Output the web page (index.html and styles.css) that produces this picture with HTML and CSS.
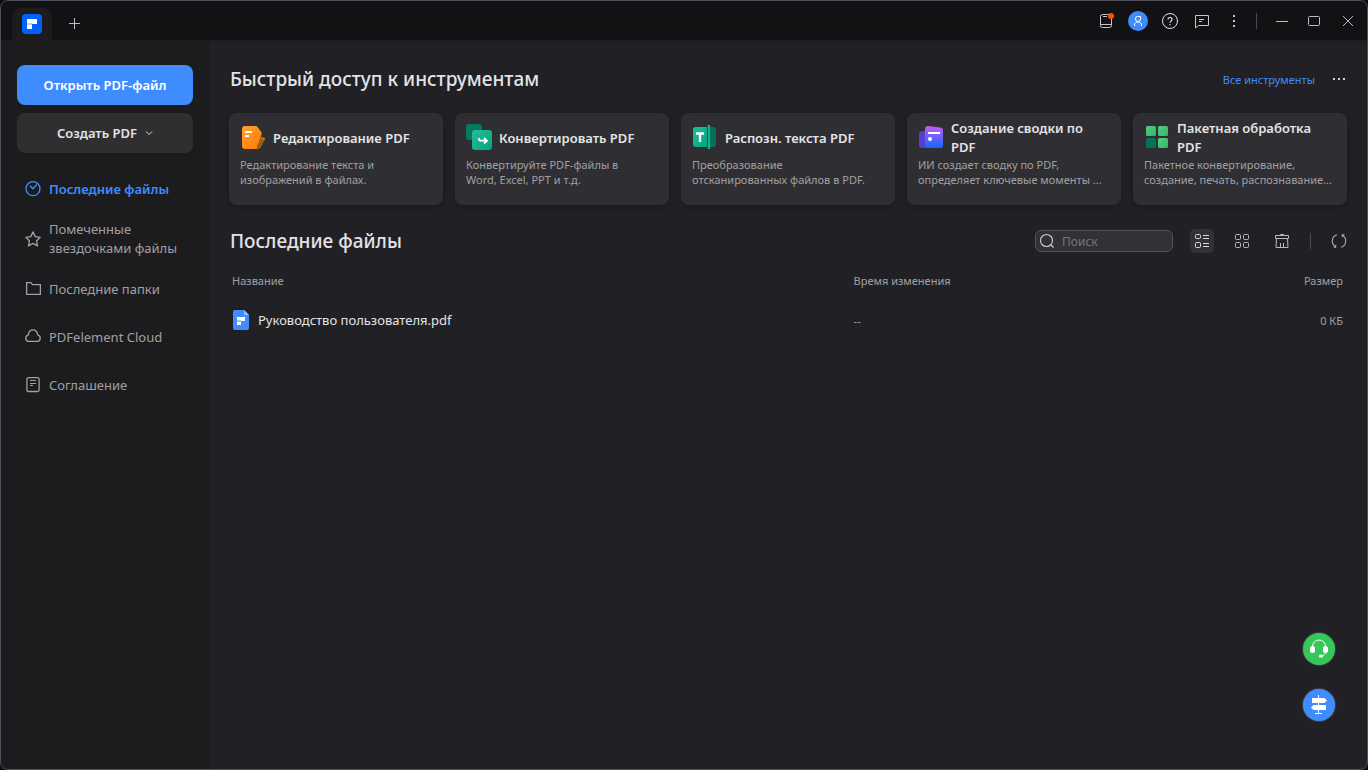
FILE: index.html
```html
<!DOCTYPE html>
<html lang="ru">
<head>
<meta charset="utf-8">
<meta name="viewport" content="width=device-width, initial-scale=1">
<title>PDFelement</title>
<link rel="stylesheet" href="styles.css">
</head>
<body>
<div class="window">
  <header class="titlebar">
    <button class="tab" aria-label="Главная">
      <svg width="20" height="20" viewBox="0 0 20 20"><rect width="20" height="20" rx="4" fill="#0061ff"/><path d="M5 5h10v5h-5V9H5z" fill="#fff"/><path d="M5 9h5v2H5z" fill="#b5d0ff"/><path d="M5 11h5v4H5z" fill="#fff"/></svg>
    </button>
    <button class="new-tab" aria-label="Новая вкладка">
      <svg width="12" height="12" viewBox="0 0 12 12"><path d="M6.500 0v11M1 5.500h11" stroke="#b9bcc4"/></svg>
    </button>
    <div class="title-actions">
      <button class="icon-btn" aria-label="Уведомления">
        <svg width="16" height="18" viewBox="0 0 16 18" fill="none" stroke="#c3c5cd"><rect x="2.500" y="2.500" width="11" height="13" rx="2"/><path d="M2.500 12.500h11M5 4.500h4"/><circle cx="13" cy="4" r="3" fill="#ff5000" stroke="none"/></svg>
      </button>
      <button class="icon-btn" aria-label="Профиль">
        <svg width="20" height="20" viewBox="0 0 20 20" fill="none" stroke="#fff"><circle cx="10" cy="10" r="10" fill="#3f8cff" stroke="none"/><path d="M12.500 5.500H9.500a2 2 0 0 0-2 2v.5a2.500 2.500 0 0 0 5 0zM6.500 15v-1c0-2 1.500-3 3.500-3s3.500 1 3.500 3v1"/></svg>
      </button>
      <button class="icon-btn" aria-label="Справка">
        <svg width="18" height="18" viewBox="0 0 18 18" fill="none" stroke="#e2e3e8"><circle cx="9" cy="9" r="7.500"/><path d="M7 7.500a2 2 0 1 1 3 1.700c-.7.400-1 .8-1 1.600M9 12v1.200" stroke-width="1.200"/></svg>
      </button>
      <button class="icon-btn" aria-label="Сообщения">
        <svg width="16" height="16" viewBox="0 0 16 16" fill="none" stroke="#c8cad3"><path d="M1.500 2.500h13v10h-10l-3 2.500zM5 6.500h5M5 8.500h3"/></svg>
      </button>
      <button class="icon-btn" aria-label="Ещё">
        <svg width="16" height="16" viewBox="0 0 16 16" fill="#bfc2cc"><path d="M7 2h2v2H7zM7 7h2v2H7zM7 12h2v2H7z"/></svg>
      </button>
      <span class="divider"></span>
      <button class="icon-btn" aria-label="Свернуть">
        <svg width="16" height="16" viewBox="0 0 16 16"><path d="M1 8.500h12" stroke="#b9bcc8"/></svg>
      </button>
      <button class="icon-btn" aria-label="Развернуть">
        <svg width="16" height="16" viewBox="0 0 16 16"><rect x="1.500" y="3.500" width="11" height="9" rx="1" fill="none" stroke="#b9bcc8"/></svg>
      </button>
      <button class="icon-btn" aria-label="Закрыть">
        <svg width="16" height="16" viewBox="0 0 16 16"><path d="M4 3l10 10M14 3L4 13" stroke="#b9bcc8"/></svg>
      </button>
    </div>
  </header>

  <div class="body">
    <aside class="sidebar">
      <button class="btn btn-primary">Открыть PDF-файл</button>
      <button class="btn btn-secondary">Создать PDF
        <svg width="8" height="6" viewBox="0 0 8 6" fill="none" stroke="#d9d9dd"><path d="M1 1.500l3 3 3-3"/></svg>
      </button>
      <nav class="nav">
        <a class="nav-item active" href="#">
          <svg width="16" height="16" viewBox="0 0 16 16" fill="none" stroke="#3f8cff" stroke-width="1.300"><circle cx="8" cy="7.700" r="7"/><path d="M5 4.700l2.800 3L12 3.500"/></svg>
          <span>Последние файлы</span></a>
        <a class="nav-item" href="#">
          <svg width="16" height="16" viewBox="0 0 16 16" fill="none" stroke="#a0a0a4" stroke-width="1.300" stroke-linejoin="round"><path d="M8 .9l2.200 4.700 5 .7-3.600 3.500.9 5.100L8 12.400l-4.500 2.500.9-5.100L.8 6.300l5-.7z"/></svg>
          <span>Помеченные звездочками файлы</span></a>
        <a class="nav-item" href="#">
          <svg width="16" height="16" viewBox="0 0 16 16" fill="none" stroke="#a0a0a4" stroke-width="1.300"><path d="M1.600 1.600h4.200l1.700 2h7.900v9.800H1.600z"/></svg>
          <span>Последние папки</span></a>
        <a class="nav-item" href="#">
          <svg width="16" height="16" viewBox="0 0 16 16" fill="none" stroke="#a0a0a4" stroke-width="1.300"><path d="M4 12.400a3.200 3.200 0 0 1-.8-6.300C3.600 3.300 5.400.8 8 .8s4.400 2.500 4.800 5.300a3.200 3.200 0 0 1-.8 6.300z"/></svg>
          <span>PDFelement Cloud</span></a>
        <a class="nav-item" href="#">
          <svg width="16" height="16" viewBox="0 0 16 16" fill="none" stroke="#a0a0a4" stroke-width="1.300"><rect x="1.900" y=".7" width="12.200" height="13.800" rx="1.500"/><path d="M5 3.500h6M5 6.500h6M5 8.500h3" stroke-width="1"/></svg>
          <span>Соглашение</span></a>
      </nav>
    </aside>

    <main class="main">
      <section class="tools">
        <div class="section-head">
          <h1>Быстрый доступ к инструментам</h1>
          <a class="all-link" href="#">Все инструменты</a>
          <button class="icon-btn narrow" aria-label="Параметры">
            <svg width="16" height="16" viewBox="0 0 16 16" fill="#d2d2d6"><path d="M2 7h2v2H2zM7 7h2v2H7zM12 7h2v2h-2z"/></svg>
          </button>
        </div>
        <div class="cards">
          <a class="card" href="#">
            <div class="card-head">
              <svg width="28" height="28" viewBox="0 0 28 28"><defs><linearGradient id="g-edit" x1="0" y1="0" x2="1" y2="1"><stop offset="0" stop-color="#ffa030"/><stop offset="1" stop-color="#ff7a08"/></linearGradient></defs><path d="M5 2h10c1.200 0 2.200.5 2.900 1.400l3.200 4.300c.6.800.8 1.800.4 2.800L17 25H5a3 3 0 0 1-3-3V5a3 3 0 0 1 3-3z" fill="url(#g-edit)"/><path d="M20.800 13.500l4.200 1.500-4.500 9-3.500 1.500V22z" fill="#996019"/><path d="M21.500 13l3.500 1.300-.5 1.700-4-1.500z" fill="#d97910"/><path d="M5 7h7v2H5zM5 11h4v2H5z" fill="#fff"/></svg>
              <h2>Редактирование PDF</h2>
            </div>
            <p>Редактирование текста и изображений в файлах.</p>
          </a>
          <a class="card" href="#">
            <div class="card-head">
              <svg width="28" height="28" viewBox="0 0 28 28"><defs><linearGradient id="g-conv" x1="0" y1="0" x2="1" y2="1"><stop offset="0" stop-color="#24bd99"/><stop offset="1" stop-color="#04a47e"/></linearGradient></defs><rect width="16" height="16" rx="3" fill="#04795f"/><rect x="6" y="6" width="20" height="20" rx="3" fill="url(#g-conv)"/><path d="M13 14v1.500c0 .8.400 1.200 1.200 1.200H20M18 14l3 2.700-3 2.800" fill="none" stroke="#fff" stroke-width="1.800"/></svg>
              <h2>Конвертировать PDF</h2>
            </div>
            <p>Конвертируйте PDF-файлы в<br>Word, Excel, PPT и т.д.</p>
          </a>
          <a class="card" href="#">
            <div class="card-head">
              <svg width="28" height="28" viewBox="0 0 28 28"><defs><linearGradient id="g-ocr" x1="0" y1="0" x2="1" y2="1"><stop offset="0" stop-color="#24bd99"/><stop offset="1" stop-color="#04a47e"/></linearGradient></defs><path d="M14 3h7a3 3 0 0 1 3 3v14a3 3 0 0 1-3 3h-7z" fill="#086f59"/><path d="M4 3h11v20H4a3 3 0 0 1-3-3V6a3 3 0 0 1 3-3z" fill="url(#g-ocr)"/><path d="M4 9.500h8M8 9v9" stroke="#fff" stroke-width="2.400"/><path d="M15 1h1v24h-1z" fill="#0b5f4f"/><path d="M16 1h2v24h-2z" fill="#12b38d"/></svg>
              <h2>Распозн. текста PDF</h2>
            </div>
            <p>Преобразование<br>отсканированных файлов в PDF.</p>
          </a>
          <a class="card" href="#">
            <div class="card-head">
              <svg width="28" height="28" viewBox="0 0 28 28"><defs><linearGradient id="g-sum" x1="0" y1="0" x2="0" y2="1"><stop offset="0" stop-color="#c65cf5"/><stop offset="1" stop-color="#1268ff"/></linearGradient></defs><path d="M4 7h8v17H4a3 3 0 0 1-3-3V10a3 3 0 0 1 3-3z" fill="#5340cc"/><path d="M10 2l12 1.600a3 3 0 0 1 3 3V21a3 3 0 0 1-3 3H10a3 3 0 0 1-3-3V5a3 3 0 0 1 3-3z" fill="url(#g-sum)"/><path d="M10 8h12v2H10z" fill="#fff"/><circle cx="12" cy="15" r="2" fill="#fff"/></svg>
              <h2>Создание сводки по PDF</h2>
            </div>
            <p>ИИ создает сводку по PDF, определяет ключевые моменты ...</p>
          </a>
          <a class="card" href="#">
            <div class="card-head">
              <svg width="28" height="28" viewBox="0 0 28 28"><defs><linearGradient id="g-batch" x1="0" y1="0" x2="1" y2="1"><stop offset="0" stop-color="#54cb82"/><stop offset="1" stop-color="#2eb869"/></linearGradient></defs><g fill="url(#g-batch)"><rect x="2" y="2" width="10" height="10" rx="1.500"/><rect x="14" y="2" width="10" height="10" rx="1.500"/><rect x="14" y="14" width="10" height="10" rx="1.500"/></g><rect x="2" y="14" width="10" height="10" rx="1.500" fill="#047458"/></svg>
              <h2>Пакетная обработка PDF</h2>
            </div>
            <p>Пакетное конвертирование, создание, печать, распознавание...</p>
          </a>
        </div>
      </section>

      <section class="files">
        <div class="files-head">
          <h1>Последние файлы</h1>
          <label class="search">
            <svg width="16" height="16" viewBox="0 0 16 16" fill="none" stroke="#d0d1d7" stroke-width="1.100"><circle cx="7.500" cy="7.500" r="6"/><path d="M12 12l2.500 2.500"/></svg>
            <input type="text" placeholder="Поиск" aria-label="Поиск">
          </label>
          <div class="views">
            <button class="view-btn selected" aria-label="Список">
              <svg width="16" height="16" viewBox="0 0 16 16" fill="none" stroke="#d3d9ee"><rect x="1.500" y="1.500" width="5" height="4" rx="1"/><rect x="1.500" y="9.500" width="5" height="5" rx="1"/><path d="M9 2.500h6M9 5.500h6M9 10.500h6M9 13.500h6"/></svg>
            </button>
            <button class="view-btn" aria-label="Плитка">
              <svg width="16" height="16" viewBox="0 0 16 16" fill="none" stroke="#b4b8c6"><rect x="1.500" y="1.500" width="5" height="5" rx="1"/><rect x="9.500" y="1.500" width="5" height="5" rx="1"/><rect x="1.500" y="9.500" width="5" height="5" rx="1"/><rect x="9.500" y="9.500" width="5" height="5" rx="1"/></svg>
            </button>
            <button class="view-btn" aria-label="Очистить">
              <svg width="16" height="16" viewBox="0 0 16 16" fill="none" stroke="#b4b8c6"><path d="M6.500 2.500v-1h3v1M1.500 2.500h13v3h-13zM2.500 5.500L2 14.500h12l-.5-9M6.500 10v4M9.500 10v4"/></svg>
            </button>
          </div>
          <span class="divider"></span>
          <button class="view-btn narrow" aria-label="Обновить">
            <svg width="16" height="16" viewBox="0 0 16 16" fill="none" stroke="#a6a9b3" stroke-width="1.100"><path d="M6 1.700a6.600 6.600 0 0 0-1.800 11.800M10 14.300a6.600 6.600 0 0 0 1.800-11.800M2.500 14.200h2.200V12M13.500 1.800h-2.200V4"/></svg>
          </button>
        </div>
        <table class="file-table">
          <thead>
            <tr><th class="col-name">Название</th><th>Время изменения</th><th class="col-size">Размер</th></tr>
          </thead>
          <tbody>
            <tr>
              <td><span class="file-name">
                <svg width="18" height="20" viewBox="0 0 18 20"><path d="M3 0h9l5 5v13a2 2 0 0 1-2 2H3a2 2 0 0 1-2-2V2a2 2 0 0 1 2-2z" fill="#3f8cff"/><path d="M12 0l5 5h-4a1 1 0 0 1-1-1z" fill="#94bfff"/><path d="M5 7h8v4H5z" fill="#fff"/><path d="M5 10h4v2H5z" fill="#9fc5ff"/><path d="M5 12h4v3H5z" fill="#fff"/></svg>
                Руководство пользователя.pdf</span></td>
              <td>--</td>
              <td class="col-size">0 КБ</td>
            </tr>
          </tbody>
        </table>
      </section>
    </main>
  </div>

  <div class="floating">
    <button class="fab fab-support" aria-label="Поддержка">
      <svg width="20" height="20" viewBox="0 0 20 20"><path d="M3.500 8V7.500a6.500 6.500 0 0 1 13 0V8M17 12c0 3-2 4.500-5 5.200" fill="none" stroke="#fff"/><rect x="1" y="7" width="5" height="7" rx="2.500" fill="#fff"/><rect x="14" y="7" width="5" height="7" rx="2.500" fill="#fff"/><ellipse cx="12" cy="17" rx="2.200" ry="1.600" fill="#fff"/></svg>
    </button>
    <button class="fab fab-guide" aria-label="Руководство">
      <svg width="20" height="20" viewBox="0 0 20 20"><path d="M9.500 0v19M6 18.500h7" stroke="#fff"/><path d="M3 3h12.500L18 5.500 15.500 8H3zM4.500 10H17v5H4.500L2 12.500z" fill="#fff"/></svg>
    </button>
  </div>
</div>
</body>
</html>
```

FILE: styles.css
```css
* { box-sizing: border-box; }

body {
  margin: 0;
  background: #0b0d1a;
  color: #e3e3e6;
  font-family: "Noto Sans", "Open Sans", sans-serif;
  font-size: 11px;
}

h1, h2, p { margin: 0; }
a { color: inherit; text-decoration: none; }
svg { display: block; flex: none; }

button {
  border: 0;
  padding: 0;
  background: none;
  color: inherit;
  font: inherit;
}

.window {
  position: relative;
  display: flex;
  flex-direction: column;
  min-height: 100vh;
  border: 1px solid #50515c;
  border-radius: 8px;
  background: #212125;
  overflow: hidden;
}

/* Title bar */
.titlebar {
  display: flex;
  align-items: flex-end;
  height: 40px;
  padding: 0 8px 0 11px;
  background: #121214;
  border-bottom: 1px solid #1c1c1e;
}

.tab {
  display: grid;
  place-items: center;
  width: 40px;
  height: 32px;
  border-radius: 8px 8px 0 0;
  background: #1c1c1e;
}

.new-tab {
  display: grid;
  place-items: center;
  width: 44px;
  height: 32px;
}

.title-actions {
  display: flex;
  align-items: center;
  gap: 8px;
  height: 39px;
  margin-left: auto;
}

.title-actions .divider { margin: 0 6px 0 2px; }

.icon-btn {
  display: grid;
  place-items: center;
  width: 24px;
  height: 24px;
}

.divider {
  width: 1px;
  height: 16px;
  background: #4a4a50;
}

.body { display: flex; flex: 1; }

/* Sidebar */
.sidebar {
  display: flex;
  flex-direction: column;
  gap: 8px;
  flex: none;
  width: 208px;
  padding: 24px 16px;
  background: #1c1c1e;
}

.btn {
  display: flex;
  align-items: center;
  justify-content: center;
  gap: 8px;
  height: 40px;
  border-radius: 8px;
  font-size: 13px;
  font-weight: 600;
}

.btn-primary { background: #3f8cff; color: #fff; }
.btn-secondary { background: #2f2f31; }

.nav {
  display: flex;
  flex-direction: column;
  padding: 4px 0;
}

.nav-item {
  display: flex;
  align-items: center;
  gap: 8px;
  min-height: 48px;
  padding: 0 8px;
  color: #a0a0a4;
  font-size: 13px;
  line-height: 19px;
}

.nav-item:nth-child(2) { min-height: 52px; }
.nav-item.active { color: #3f8cff; font-weight: 600; }

/* Main area */
.main {
  flex: 1;
  min-width: 0;
  padding: 24px 20px;
}

h1 {
  font-size: 19px;
  font-weight: 500;
  line-height: 28px;
}

.section-head {
  display: flex;
  align-items: center;
  gap: 16px;
  height: 28px;
  padding-left: 1px;
}

.section-head h1, .files-head h1 { margin-right: auto; }
.all-link { color: #3f8cff; }

.cards {
  display: grid;
  grid-template-columns: repeat(5, 1fr);
  gap: 12px;
  margin-top: 20px;
}

.card {
  min-height: 92px;
  padding: 6px 11px;
  border-radius: 8px;
  background: #2f2f33;
  box-shadow: 0 2px 6px rgba(0, 0, 0, 0.2);
}

.card-head {
  display: flex;
  align-items: center;
  gap: 5px;
  height: 38px;
}

.card h2 {
  font-size: 13px;
  font-weight: 600;
  line-height: 19px;
}

.card p {
  color: #a0a0a2;
  line-height: 15px;
}

.files { margin-top: 22px; }

.files-head {
  display: flex;
  align-items: center;
  height: 28px;
  padding-left: 1px;
}

.search {
  display: flex;
  align-items: center;
  gap: 7px;
  width: 138px;
  height: 22px;
  padding: 0 3px;
  border: 1px solid #515156;
  border-radius: 6px;
  background: #313136;
}

.search input {
  width: 100%;
  min-width: 0;
  padding: 0;
  border: 0;
  outline: 0;
  background: none;
  color: #e3e3e6;
  font: inherit;
  font-size: 12px;
}

.search input::placeholder { color: #77777b; }

.views {
  display: flex;
  gap: 16px;
  margin: 0 16px 0 17px;
}

.view-btn {
  display: grid;
  place-items: center;
  width: 24px;
  height: 24px;
  border-radius: 5px;
}

.view-btn.selected { background: #313136; }
.files-head > .view-btn { margin-left: 20px; }
.narrow { width: 16px; }

/* Recent files */
.file-table {
  width: 100%;
  margin-top: 5px;
  border-collapse: collapse;
  table-layout: fixed;
  color: #a0a0a2;
}

.file-table th, .file-table td {
  height: 40px;
  padding: 0 3px;
  font-weight: 400;
  text-align: left;
}

.file-table .col-name { width: 55.6%; }
.file-table .col-size { padding-right: 4px; text-align: right; }

.file-name {
  display: flex;
  align-items: center;
  gap: 8px;
  color: #e3e3e6;
  font-size: 13px;
}

/* Floating buttons */
.floating {
  position: absolute;
  right: 32px;
  bottom: 48px;
  display: flex;
  flex-direction: column;
  gap: 24px;
}

.fab {
  display: grid;
  place-items: center;
  width: 32px;
  height: 32px;
  border-radius: 50%;
  box-shadow: 0 0 2px rgba(255, 255, 255, 0.4);
}

.fab-support { background: #34c759; }
.fab-guide { background: #3f8cff; }
```
